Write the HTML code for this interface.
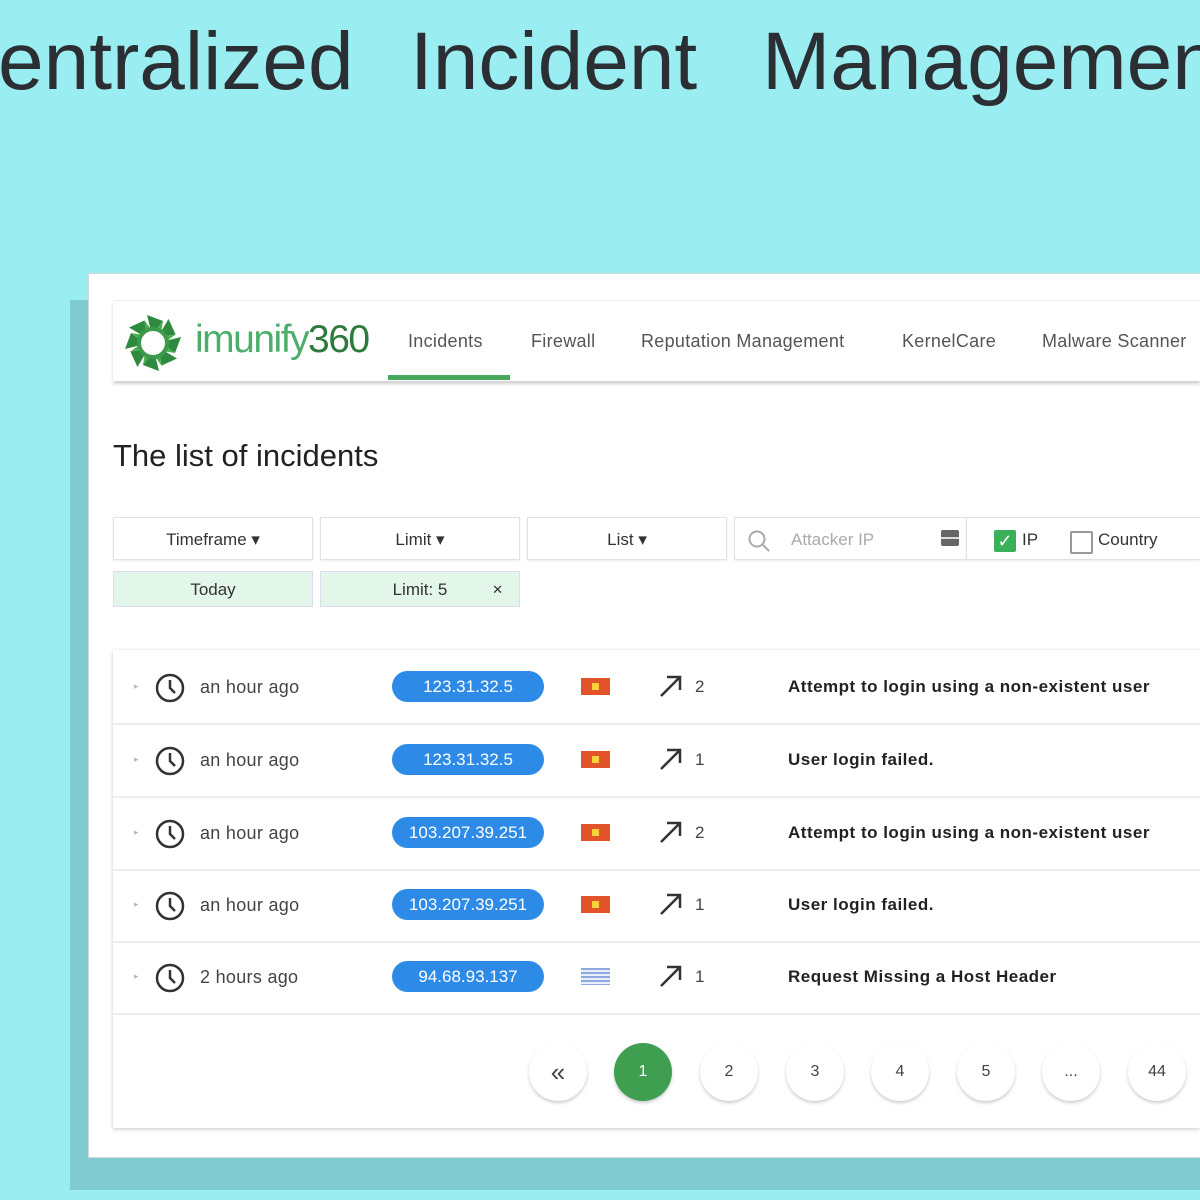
<!DOCTYPE html>
<html><head><meta charset="utf-8"><style>
body{margin:0;width:1200px;height:1200px;background:#9aeef1;position:relative;overflow:hidden;font-family:"Liberation Sans",sans-serif}
.t{position:absolute;top:2px;font-size:82px;line-height:120px;color:#2b2f33;white-space:nowrap}
.abs{position:absolute}
.shadowp{left:70px;top:300px;width:1130px;height:890px;background:#7fcbcf}
.win{left:88px;top:273px;width:1112px;height:885px;background:#fff;border:1px solid #cfd8d8;border-right:none;box-sizing:border-box}
.nav{left:113px;top:300px;width:1087px;height:80px;background:#fff;box-shadow:0 3px 3px rgba(0,0,0,.18);border-top:1px solid #eee}
.ni{position:absolute;top:331px;font-size:18px;color:#555;letter-spacing:.3px;white-space:nowrap}
.fb{position:absolute;height:43px;border:1px solid #e2e2e2;background:#fff;box-shadow:0 1px 2px rgba(0,0,0,.08);font-size:17px;color:#333;text-align:center;line-height:43px;box-sizing:border-box}
.fg{position:absolute;height:36px;border:1px solid #dde;background:#e3f6ea;font-size:17px;color:#333;text-align:center;line-height:36px;box-sizing:border-box}
.tbl{left:113px;top:650px;width:1087px;height:478px;background:#fff;box-shadow:0 1px 4px rgba(0,0,0,.22)}
.row{position:absolute;left:113px;width:1087px;height:72px;border-bottom:2px solid #eee;overflow:hidden}
.row .tri{position:absolute;left:21px;top:30px;font-size:9px;color:#bbb}
.row .clk{position:absolute;left:42px;top:22px}
.row .tm{position:absolute;left:87px;top:26px;font-size:18px;color:#444;letter-spacing:.3px}
.row .ip{position:absolute;left:279px;top:20px;width:152px;height:31px;border-radius:16px;background:#2d8ae6;color:#fff;font-size:17px;text-align:center;line-height:31px}
.row .fl{position:absolute;left:468px;top:27px;width:29px;height:17px}
.row .ar{position:absolute;left:545px;top:22px}
.row .n{position:absolute;left:582px;top:26px;font-size:17px;color:#444}
.row .msg{position:absolute;left:675px;top:26px;font-size:17px;font-weight:bold;color:#222;white-space:nowrap;letter-spacing:.5px}
.pg{position:absolute;top:1043px;width:58px;height:58px;border-radius:50%;background:#fff;box-shadow:0 2px 3px rgba(0,0,0,.2);text-align:center;line-height:58px;font-size:16px;color:#444}
</style></head><body>
<div class="t" style="left:-2px">entralized</div>
<div class="t" style="left:410px">Incident</div>
<div class="t" style="left:762px;width:438px;overflow:hidden">Management</div>

<div class="abs shadowp"></div>
<div class="abs win"></div>
<div class="abs nav"></div>
<svg class="abs" style="left:120px;top:310px" width="66" height="66" viewBox="-33 -33 66 66">
<g fill="#2e8a3e">
<g id="p"><path d="M-6,-28 L10,-22 L4,-14 L-2,-12 Z"/><path d="M10,-22 L8,-10 L4,-14Z" fill="#4caf50"/></g>
<use href="#p" transform="rotate(45)"/><use href="#p" transform="rotate(90)"/><use href="#p" transform="rotate(135)"/><use href="#p" transform="rotate(180)"/><use href="#p" transform="rotate(225)"/><use href="#p" transform="rotate(270)"/><use href="#p" transform="rotate(315)"/>
</g>
<circle r="14" fill="none" stroke="#3d9a4b" stroke-width="4"/>
</svg>
<div class="abs" style="left:195px;top:318px;font-size:39px;color:#4cae6a;letter-spacing:-1.5px">imunify<span style="color:#2c7a3c">360</span></div>
<div class="ni" style="left:408px">Incidents</div>
<div class="ni" style="left:531px">Firewall</div>
<div class="ni" style="left:641px">Reputation Management</div>
<div class="ni" style="left:902px">KernelCare</div>
<div class="ni" style="left:1042px">Malware Scanner</div>
<div class="abs" style="left:388px;top:375px;width:122px;height:5px;background:#45a85a"></div>

<div class="abs" style="left:113px;top:438px;font-size:31px;color:#222">The list of incidents</div>

<div class="fb" style="left:113px;top:517px;width:200px">Timeframe ▾</div>
<div class="fb" style="left:320px;top:517px;width:200px">Limit ▾</div>
<div class="fb" style="left:527px;top:517px;width:200px">List ▾</div>
<div class="fb" style="left:734px;top:517px;width:233px;text-align:left;color:#aaa">
<svg class="abs" style="left:12px;top:11px" width="26" height="26" viewBox="0 0 26 26"><circle cx="10" cy="10" r="7.5" fill="none" stroke="#aaa" stroke-width="2"/><path d="M15.5 15.5 L22 22" stroke="#aaa" stroke-width="2"/></svg>
<span style="position:absolute;left:56px">Attacker IP</span>
<div class="abs" style="left:206px;top:12px;width:18px;height:16px;background:#666;border-radius:2px"><div style="margin-top:7px;height:2px;background:#ddd"></div></div></div>
<div class="fb" style="left:966px;top:517px;width:234px;text-align:left;border-right:none">
<div class="abs" style="left:27px;top:12px;width:22px;height:22px;background:#3bb05a;border-radius:2px;color:#fff;font-size:18px;line-height:22px;text-align:center">✓</div>
<span class="abs" style="left:55px">IP</span>
<div class="abs" style="left:103px;top:13px;width:19px;height:19px;border:2px solid #999;border-radius:2px"></div>
<span class="abs" style="left:131px">Country</span></div>
<div class="fg" style="left:113px;top:571px;width:200px">Today</div>
<div class="fg" style="left:320px;top:571px;width:200px">Limit: 5<span style="position:absolute;right:16px;font-size:13px">✕</span></div>

<div class="abs tbl"></div>
<div class="row" style="top:651px"><span class="tri">▸</span><svg class="clk" width="30" height="30"><circle cx="15" cy="15" r="13" fill="none" stroke="#333" stroke-width="2.5"/><path d="M15 7v8l5 5" fill="none" stroke="#333" stroke-width="2.5"/></svg><span class="tm">an hour ago</span><div class="ip">123.31.32.5</div><div class="fl" style="background:#e2532a"><div style="width:7px;height:7px;background:#f7d33a;margin:5px auto"></div></div><svg class="ar" width="26" height="26"><path d="M3 23 L22 4 M9 4 H22 V17" fill="none" stroke="#333" stroke-width="2.5"/></svg><span class="n">2</span><span class="msg">Attempt to login using a non-existent user</span></div>
<div class="row" style="top:724px"><span class="tri">▸</span><svg class="clk" width="30" height="30"><circle cx="15" cy="15" r="13" fill="none" stroke="#333" stroke-width="2.5"/><path d="M15 7v8l5 5" fill="none" stroke="#333" stroke-width="2.5"/></svg><span class="tm">an hour ago</span><div class="ip">123.31.32.5</div><div class="fl" style="background:#e2532a"><div style="width:7px;height:7px;background:#f7d33a;margin:5px auto"></div></div><svg class="ar" width="26" height="26"><path d="M3 23 L22 4 M9 4 H22 V17" fill="none" stroke="#333" stroke-width="2.5"/></svg><span class="n">1</span><span class="msg">User login failed.</span></div>
<div class="row" style="top:797px"><span class="tri">▸</span><svg class="clk" width="30" height="30"><circle cx="15" cy="15" r="13" fill="none" stroke="#333" stroke-width="2.5"/><path d="M15 7v8l5 5" fill="none" stroke="#333" stroke-width="2.5"/></svg><span class="tm">an hour ago</span><div class="ip">103.207.39.251</div><div class="fl" style="background:#e2532a"><div style="width:7px;height:7px;background:#f7d33a;margin:5px auto"></div></div><svg class="ar" width="26" height="26"><path d="M3 23 L22 4 M9 4 H22 V17" fill="none" stroke="#333" stroke-width="2.5"/></svg><span class="n">2</span><span class="msg">Attempt to login using a non-existent user</span></div>
<div class="row" style="top:869px"><span class="tri">▸</span><svg class="clk" width="30" height="30"><circle cx="15" cy="15" r="13" fill="none" stroke="#333" stroke-width="2.5"/><path d="M15 7v8l5 5" fill="none" stroke="#333" stroke-width="2.5"/></svg><span class="tm">an hour ago</span><div class="ip">103.207.39.251</div><div class="fl" style="background:#e2532a"><div style="width:7px;height:7px;background:#f7d33a;margin:5px auto"></div></div><svg class="ar" width="26" height="26"><path d="M3 23 L22 4 M9 4 H22 V17" fill="none" stroke="#333" stroke-width="2.5"/></svg><span class="n">1</span><span class="msg">User login failed.</span></div>
<div class="row" style="top:941px"><span class="tri">▸</span><svg class="clk" width="30" height="30"><circle cx="15" cy="15" r="13" fill="none" stroke="#333" stroke-width="2.5"/><path d="M15 7v8l5 5" fill="none" stroke="#333" stroke-width="2.5"/></svg><span class="tm">2 hours ago</span><div class="ip">94.68.93.137</div><div class="fl" style="background:repeating-linear-gradient(#8fa8dd 0 2px,#e8eefa 2px 4px)"></div><svg class="ar" width="26" height="26"><path d="M3 23 L22 4 M9 4 H22 V17" fill="none" stroke="#333" stroke-width="2.5"/></svg><span class="n">1</span><span class="msg">Request Missing a Host Header</span></div>

<div class="pg" style="left:529px;font-size:26px">«</div>
<div class="pg" style="left:614px;background:#3f9e4f;color:#fff">1</div>
<div class="pg" style="left:700px">2</div>
<div class="pg" style="left:786px">3</div>
<div class="pg" style="left:871px">4</div>
<div class="pg" style="left:957px">5</div>
<div class="pg" style="left:1042px">...</div>
<div class="pg" style="left:1128px">44</div>
</body></html>
